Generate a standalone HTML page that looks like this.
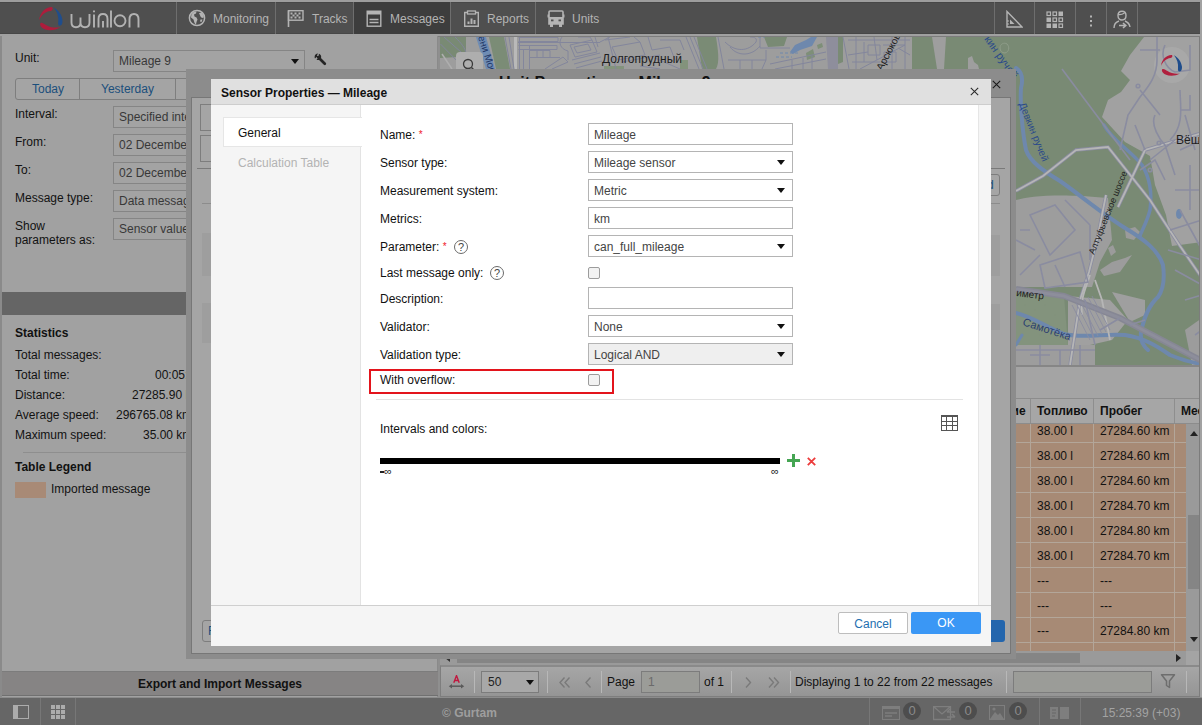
<!DOCTYPE html>
<html><head><meta charset="utf-8">
<style>
*{box-sizing:border-box}
html,body{margin:0;padding:0}
body{width:1202px;height:725px;overflow:hidden;position:relative;background:#8f8f8f;font-family:"Liberation Sans",sans-serif;font-size:12px;color:#111}
.a{position:absolute}
.t{position:absolute;white-space:nowrap;line-height:14px}
/* header */
#hdr{left:0;top:2px;width:1202px;height:32px;background:#4f4f4f;border-top:1px solid #474747;border-bottom:1px solid #474747}
.hl{position:absolute;left:0;width:1202px}
.sep{position:absolute;top:-1px;width:1px;height:32px;background:#6e6e6e}
.nav{position:absolute;top:9px;color:#b4b4b4;font-size:12px;line-height:14px}
/* left panel */
#lp{left:0;top:36px;width:438px;height:661px;background:#a1a1a1;border-left:2px solid #8a8a8a;border-right:1px solid #8a8a8a}
.lbl{position:absolute;color:#121212;font-size:12px;line-height:14px}
.inp{position:absolute;height:22px;border:1px solid #858585;background:#a3a3a3;color:#383838;font-size:12px;line-height:21px;padding-left:5px;white-space:nowrap;overflow:hidden}
.dl{position:absolute;left:380px;white-space:nowrap;line-height:14px;color:#111}
.di{position:absolute;left:588px;width:205px;height:22px;border:1px solid #b4b4b4;background:#fff;color:#444;line-height:22px;padding-left:5px;white-space:nowrap}
.arr{position:absolute;right:7px;top:8px;width:0;height:0;border-left:4px solid transparent;border-right:4px solid transparent;border-top:5px solid #111}
.cb{position:absolute;left:588px;width:12px;height:12px;border:1px solid #9c9c9c;border-radius:2px;background:#f2f2f2}
.hlp{position:absolute;width:14px;height:14px;border:1px solid #6a6a6a;border-radius:50%;color:#444;font-size:11px;line-height:12px;text-align:center}
.sepf{position:absolute;top:0;width:1px;height:27px;background:#777}
.badge{position:absolute;top:4px;width:18px;height:18px;border-radius:50%;background:#4d4d4d;color:#8a8a8a;font-size:13px;line-height:18px;text-align:center}
</style></head><body>

<div class="hl" style="top:0;height:2px;background:#9d9d9d"></div>
<div class="hl" style="top:34px;height:2px;background:#a0a0a0"></div>
<div class="hl" style="top:36px;height:1px;background:#7c7c7c"></div>
<!-- HEADER -->
<div id="hdr" class="a">
  <div class="a" style="left:354px;top:-1px;width:96px;height:32px;background:#3d3d3d"></div>
  <svg class="a" style="left:34px;top:-1px" width="110" height="32" viewBox="34 2 110 32">
    <path d="M51.5 7 C46 7 40 12 39 20.5 C41 15.5 45 11.5 50.5 11 C53 10.7 53.3 7.1 51.5 7 Z" fill="#ad1d3c"/>
    <path d="M41 22.8 C39 24 40.5 27.3 44 29 C49 31 55 30.5 60.5 27.3 C55 28 49.5 27.5 45.5 24.8 C43.5 23.5 42.3 22.2 41 22.8 Z" fill="#ad1d3c"/>
    <path d="M53.3 7.2 C58.5 10 62.3 15 62.5 21 C62.5 24 61.5 25.6 59.8 25.7 C58.3 25.8 57.9 24.2 58.2 22.5 C59 17 57.3 11.5 53.3 7.2 Z" fill="#1f4d8c"/>
    <g stroke="#b2b2b2" stroke-width="1.9" fill="none">
      <path d="M71.5 14 V22.5 Q71.5 27.2 76 27.2 Q80.5 27.2 80.5 22.5 V17.5 M80.5 22.5 Q80.5 27.2 85 27.2 Q89.5 27.2 89.5 22.5 V14"/>
      <path d="M94 14.5 V27.5 M94 10.5 V12.3"/>
      <path d="M98.5 27.5 V19 Q98.5 14 103 14 Q107.5 14 107.5 19 V27.5 M103 21 V27.5"/>
      <path d="M111 10.5 V27.5"/>
      <circle cx="120" cy="20.7" r="5.5"/>
      <path d="M129.5 27.5 V19.5 Q129.5 14 134 14 Q138.5 14 138.5 19.5 V27.5"/>
    </g>
  </svg>
  <svg class="a" style="left:188px;top:6px" width="18" height="18" viewBox="0 0 18 18">
    <circle cx="9" cy="9" r="7.6" fill="none" stroke="#b4b4b4" stroke-width="1.5"/>
    <path d="M3.5 5 C5 3 7 2.3 8.5 2.5 L8 4.5 L6 5.5 L6.5 7.5 L8.5 8.5 L9.5 10.5 L8.5 13 L8 15.5 C6.5 15 6 12 5.5 10.5 L3 8.5 Z" fill="#b4b4b4"/>
    <path d="M11 4 L13.5 3.8 C15 5 15.8 7 15.8 8.5 L14 9 L12.5 7.5 Z M12.5 10.5 L14.5 10.5 L13.5 13 L12 12.5 Z" fill="#b4b4b4"/>
  </svg>
  <svg class="a" style="left:287px;top:6px" width="18" height="18" viewBox="0 0 18 18">
    <path d="M1.5 1.5 V18" stroke="#b4b4b4" stroke-width="1.6"/>
    <rect x="1.5" y="1.7" width="14.5" height="9.5" fill="none" stroke="#b4b4b4" stroke-width="1.4"/>
    <g fill="#b4b4b4"><rect x="3.5" y="3.5" width="2" height="2"/><rect x="7.5" y="3.5" width="2" height="2"/><rect x="11.5" y="3.5" width="2" height="2"/><rect x="5.5" y="5.5" width="2" height="2"/><rect x="9.5" y="5.5" width="2" height="2"/><rect x="3.5" y="7.5" width="2" height="2"/><rect x="7.5" y="7.5" width="2" height="2"/><rect x="11.5" y="7.5" width="2" height="2"/></g>
  </svg>
  <svg class="a" style="left:366px;top:6px" width="16" height="18" viewBox="0 0 16 18">
    <rect x="1.2" y="2.2" width="13.6" height="15" fill="none" stroke="#b4b4b4" stroke-width="1.4"/>
    <rect x="1" y="2" width="14" height="3.5" fill="#b4b4b4"/>
    <path d="M3.5 10.5H12.5M3.5 13.5H12.5" stroke="#b4b4b4" stroke-width="1.3"/>
  </svg>
  <svg class="a" style="left:463px;top:6px" width="17" height="18" viewBox="0 0 17 18">
    <path d="M4 3.5 H1.7 V17.3 H15.3 V3.5 H13" fill="none" stroke="#b4b4b4" stroke-width="1.4"/>
    <rect x="4.5" y="2" width="8" height="3" fill="none" stroke="#b4b4b4" stroke-width="1.3"/>
    <path d="M5.5 15V12.5M8.5 15V9.5M11.5 15V11" stroke="#b4b4b4" stroke-width="2"/>
  </svg>
  <svg class="a" style="left:547px;top:7px" width="18" height="17" viewBox="0 0 18 17">
    <path d="M3 1 H15 Q16 1 16 2 V14 H2 V2 Q2 1 3 1 Z" fill="none" stroke="#b4b4b4" stroke-width="1.6"/>
    <rect x="2" y="7" width="14" height="7" fill="#b4b4b4"/>
    <rect x="3" y="14" width="3" height="3" fill="#b4b4b4"/><rect x="12" y="14" width="3" height="3" fill="#b4b4b4"/>
    <rect x="0.5" y="4.5" width="1.5" height="3" fill="#b4b4b4"/><rect x="16" y="4.5" width="1.5" height="3" fill="#b4b4b4"/>
    <rect x="4" y="9.5" width="2.5" height="1.8" fill="#4f4f4f"/><rect x="11.5" y="9.5" width="2.5" height="1.8" fill="#4f4f4f"/>
  </svg>
  <svg class="a" style="left:1005px;top:7px" width="18" height="18" viewBox="0 0 18 18">
    <path d="M2 1.5 V17 H17 Z" fill="none" stroke="#b4b4b4" stroke-width="1.4" stroke-linejoin="miter"/>
    <path d="M5 9.5 V14 H9.5 Z" fill="#b4b4b4"/>
    <path d="M2 11H4M2 14H4" stroke="#b4b4b4" stroke-width="1"/>
  </svg>
  <svg class="a" style="left:1046px;top:7px" width="18" height="18" viewBox="0 0 18 18">
    <g fill="none" stroke="#b4b4b4" stroke-width="1.2"><rect x="1" y="2" width="3.5" height="3.5"/><rect x="7" y="2" width="3.5" height="3.5"/><rect x="7" y="8" width="3.5" height="3.5"/><rect x="13" y="8" width="3.5" height="3.5"/><rect x="13" y="14" width="3.5" height="3.5"/></g>
    <g fill="#b4b4b4"><rect x="12.5" y="1.5" width="4.5" height="4.5"/><rect x="0.5" y="7.5" width="4.5" height="4.5"/><rect x="0.5" y="13.5" width="4.5" height="4.5"/><rect x="6.5" y="13.5" width="4.5" height="4.5"/></g>
  </svg>
  <svg class="a" style="left:1088px;top:11px" width="6" height="14" viewBox="0 0 6 14"><g fill="#b4b4b4"><rect x="2" y="1.5" width="2" height="2"/><rect x="2" y="6" width="2" height="2"/><rect x="2" y="10.5" width="2" height="2"/></g></svg>
  <svg class="a" style="left:1113px;top:7px" width="18" height="19" viewBox="0 0 18 19">
    <path d="M9 1.2 C6 1.2 5 3.5 5 5.5 C5 8 6.5 10 9 10 C11.5 10 13 8 13 5.5 C13 3.5 12 1.2 9 1.2 Z" fill="none" stroke="#b4b4b4" stroke-width="1.4"/>
    <path d="M5 4.5 C7 5 10 4 11.5 3" stroke="#b4b4b4" stroke-width="1.2" fill="none"/>
    <path d="M1 18 C1 14 3 12 6 11 M12 11 C14.5 12 16.5 13.5 17 17" fill="none" stroke="#b4b4b4" stroke-width="1.4"/>
    <path d="M6 15.5 H12.5 M10 13 L12.8 15.5 L10 18" fill="none" stroke="#b4b4b4" stroke-width="1.6"/>
  </svg>
  <div class="sep" style="left:176px"></div>
  <div class="nav" style="left:213px">Monitoring</div>
  <div class="sep" style="left:275px"></div>
  <div class="nav" style="left:312px">Tracks</div>
  <div class="sep" style="left:353px"></div>
  
  <div class="nav" style="left:390px">Messages</div>
  <div class="sep" style="left:450px"></div>
  <div class="nav" style="left:487px">Reports</div>
  <div class="sep" style="left:535px"></div>
  <div class="nav" style="left:572px">Units</div>
  <div class="sep" style="left:994px"></div>
  <div class="sep" style="left:1034px"></div>
  <div class="sep" style="left:1075px"></div>
  <div class="sep" style="left:1106px"></div>
  <div class="sep" style="left:1137px"></div>
</div>

<!-- LEFT PANEL -->
<div id="lp" class="a"></div>
<div class="lbl" style="left:15px;top:51px">Unit:</div>
<div class="inp" style="left:113px;top:50px;width:192px">Mileage 9</div>
<div class="a" style="left:291px;top:59px;width:0;height:0;border-left:4px solid transparent;border-right:4px solid transparent;border-top:5px solid #111"></div>
<svg class="a" style="left:312px;top:51px" width="16" height="16" viewBox="0 0 16 16"><path d="M6.5 6.5 L12.8 12.8" stroke="#252525" stroke-width="2.7" stroke-linecap="round"/><path d="M6 2.5 C4 2.5 2.6 4 2.6 5.9 C2.6 6.5 2.7 7 3 7.4 L4.5 5.9 L5.9 7.2 L4.5 8.8 C4.9 9 5.4 9.1 5.9 9.1 C7.8 9.1 9.2 7.7 9.2 5.9 C9.2 4.3 8.3 3.1 6.9 2.7 L6.7 4.6 L5.9 5.3 L4.9 4.4 Z" fill="#252525"/></svg>
<div class="a" style="left:15px;top:78px;width:180px;height:22px;border:1px solid #7e7e7e;border-radius:3px;background:#a4a4a4"></div>
<div class="a" style="left:79px;top:78px;width:1px;height:22px;background:#7e7e7e"></div>
<div class="a" style="left:175px;top:78px;width:1px;height:22px;background:#7e7e7e"></div>
<div class="t" style="left:32px;top:82px;color:#1b4f7c">Today</div>
<div class="t" style="left:101px;top:82px;color:#1b4f7c">Yesterday</div>
<div class="lbl" style="left:15px;top:107px">Interval:</div>
<div class="inp" style="left:113px;top:106px;width:100px">Specified interval</div>
<div class="lbl" style="left:15px;top:135px">From:</div>
<div class="inp" style="left:113px;top:134px;width:100px">02 December</div>
<div class="lbl" style="left:15px;top:163px">To:</div>
<div class="inp" style="left:113px;top:162px;width:100px">02 December</div>
<div class="lbl" style="left:15px;top:191px">Message type:</div>
<div class="inp" style="left:113px;top:190px;width:100px">Data messages</div>
<div class="lbl" style="left:15px;top:219px">Show</div>
<div class="lbl" style="left:15px;top:233px">parameters as:</div>
<div class="inp" style="left:113px;top:218px;width:100px">Sensor values</div>
<div class="a" style="left:2px;top:292px;width:436px;height:23px;background:#656565"></div>
<div class="t" style="left:15px;top:326px;font-weight:bold">Statistics</div>
<div class="lbl" style="left:15px;top:348px">Total messages:</div>
<div class="lbl" style="left:15px;top:368px">Total time:</div>
<div class="lbl" style="left:15px;top:388px">Distance:</div>
<div class="lbl" style="left:15px;top:408px">Average speed:</div>
<div class="lbl" style="left:15px;top:428px">Maximum speed:</div>
<div class="lbl" style="left:155px;top:368px">00:05:00</div>
<div class="lbl" style="left:132px;top:388px">27285.90 km</div>
<div class="lbl" style="left:116px;top:408px">296765.08 km/h</div>
<div class="lbl" style="left:143px;top:428px">35.00 km/h</div>
<div class="a" style="left:23px;top:452px;width:415px;height:1px;background:#8e8e8e"></div>
<div class="t" style="left:15px;top:460px;font-weight:bold">Table Legend</div>
<div class="a" style="left:15px;top:482px;width:31px;height:16px;background:#a88a76"></div>
<div class="lbl" style="left:51px;top:482px">Imported message</div>
<div class="a" style="left:2px;top:671px;width:436px;height:25px;background:#868484;border-top:1px solid #7c7c7c;border-bottom:1px solid #707070"></div>
<div class="t" style="left:138px;top:677px;font-weight:bold">Export and Import Messages</div>


<!-- MAP -->
<div id="map" class="a" style="left:440px;top:37px;width:762px;height:328px;background:#9d9d9d;overflow:hidden">
<svg width="762" height="328" viewBox="440 37 762 328" style="position:absolute;left:0;top:0">
 <!-- ===== top strip ===== -->
 <path d="M440 37 H466 V52 L458 57 L440 58 Z" fill="#798a74"/>
 <path d="M489 37 H504 L510 69 H496 Z" fill="#7b8c76"/>
 <path d="M697 37 H716 C718 50 720 62 716 69 H702 Z" fill="#7a8b75"/>
 <path d="M604 66 h20 v3 h-20 Z M680 60 h8 v9 h-8 Z" fill="#83937c"/>
 <path d="M764 37 H787 L784 46 L768 47 Z" fill="#798a74"/>
 <path d="M817 45 l5 -2 l1 4 l-5 2 Z M806 53 l7 -4 l2 8 l-8 3 Z" fill="#7e8f78"/>
 <path d="M836 37 H843 V62 L838 64 Z" fill="#7a8b75"/>
 <path d="M912 37 H1016 V69 H912 Z" fill="#798a74"/>
 <path d="M932 37 H946 L944 69 H937 Z" fill="#9e9e9e"/>
 <path d="M968 58 l4 -2 l2 6 l4 3 l1 4 h-11 Z" fill="#9e9e9e"/>
 <path d="M817 37 L812 46 L800 50 L793 54 L790 52 L795 45 L806 40 L811 37 Z" fill="#6e88ad"/>
 <path d="M476 37 H486 L495 69 H486 Z" fill="#6e8cb4"/>
 <g stroke="#b9b9b9" stroke-width="3" fill="none"><path d="M515.5 37 V69"/></g><path d="M442 54 L452 69" stroke="#aeaeae" stroke-width="1.5"/>
 <path d="M826 37 H838 V69 H828 Z" fill="#8e8e9c"/>
 <g stroke="#83869c" stroke-width="1" fill="none">
  <path d="M440.5 44 L462 66 M444 37 L470 60 M455 37 C462 44 465 48 466 53"/>
  <path d="M505 37 L511 69 M509 37 L514 69 M519.5 37 V69"/>
  <path d="M518.5 37.5 H558 V41.5 H518.5 M518 42.5 H600 M518.5 45.5 H557 V49.5 H518.5 M523.5 49.5 V69 M529.5 45.5 V69 M529.5 50.5 H550 V57.5 H529.5 M537 50 V57 M543 50 V57 M529 57.5 H560 M545 69 L563 57 L568 62 L552 69"/>
  <path d="M562 37 C558 42 560 49 568 51 V60"/>
  <path d="M570 45 L592 40 L597 52 L575 57 Z M574 47 L588 44 L591 50 L577 53 Z M572 60 L600 53 M574 64 L601 57 M576 68 L602 61"/>
  <path d="M578 37 L590 37 L592 40 M595 37 L598 47 M600 42 L610 37"/>
  <path d="M605 40 L630 37 M608 37 L616 69 M612 47 L640 42 L645 55 L618 60 Z M622 62 L660 55 M634 37 L640 42 M648 37 L652 50 L670 47 L675 60 M655 58 L680 69 M660 40 H680 L684 50 M640 66 L660 69"/>
  <path d="M686 37 L699 69 M690 37 L703 69 M694 37 L707 69"/>
  <path d="M718 37 L724 69 M725 42 C735 52 748 52 756 42 C758 37 752 37 750 37 M730 47 C738 57 752 56 760 46 M728 60 H766 M740 60 V69 M752 60 V69"/>
  <path d="M760 37 V48 H790 M766 50 V60 L762 69 M770 64 L826 52 M775 69 L826 59 M792 60 V69 M803 58 V69 M812 56 V69"/>
  <path d="M843 37 L849 69 M848 40 H910 M856 37 V69 M864 42 V62 M874 37 L877 60 M883 45 H905 M892 37 V69 M898 48 L910 55 M848 55 L868 52 M852 62 H880 M860 69 L905 45 M905 37 V69 M868 45 H880 V55 H868 Z M884 52 H896 V62 H884 Z"/>
</g>
 <path d="M758 37 L765 37 M780 53 H800 M776 57 H792" stroke="#6e88ad" stroke-width="1" stroke-dasharray="3 2"/>
 <path d="M1000 48 C1000 44 1004 42 1007 44 C1010 47 1009 52 1005 53 C1002 53 1000 51 1000 48 Z" stroke="#8f9d8a" fill="none"/>
 <path d="M1062 68 L1100 130" stroke="#8a8d8c" stroke-width="0.9"/>
 <!-- ===== right strip ===== -->
 <path d="M1016 37 H1202 V365 H1016 Z" fill="#798a74"/>
 <path d="M1144 37 H1202 V242 L1172 246 L1166 215 L1155 185 L1150 156 L1125 142 L1102 117 L1108 100 L1121 92 L1130 80 L1121 71 L1130 55 Z" fill="#a1a1a1"/>
 <circle cx="1172" cy="65" r="18" fill="#a8a8a8"/>
 <path d="M1016 200 C1030 196 1060 193 1108 198 L1112 240 L1100 262 L1092 287 L1016 287 Z" fill="#9d9d9d"/>
 <path d="M1016 288 L1064 296 L1068 345 L1016 345 Z" fill="#83937d"/>
 <path d="M1016 345 H1095 V365 H1016 Z" fill="#9d9d9d"/>
 <path d="M1068 296 L1110 300 L1128 320 L1112 340 L1090 345 L1068 345 Z" fill="#a0a0a0"/>
 <path d="M1100 270 L1112 262 L1125 258 L1132 255 L1120 272 L1104 276 Z" fill="#9c9c9c"/>
 <path d="M1112 292 L1145 300 L1145 315 L1130 322 Z" fill="#9f9f9f"/>
 <path d="M1185 330 L1202 318 V365 H1192 Z" fill="#9c9c9c"/>
 <path d="M1125 230 l10 -3 l5 5 l-6 8 l-8 -2 Z M1108 248 l5 -3 l3 7 l-5 4 Z" fill="#9b9b9b"/>
 <!-- rivers -->
 <g stroke="#6e88ad" fill="none" stroke-linecap="round" stroke-linejoin="round">
  <path d="M1016 68 C1022 72 1023 80 1021 88 C1020 100 1022 130 1026 150 C1030 162 1045 172 1060 181 C1080 195 1100 212 1125 228 C1145 240 1158 250 1163 265 C1165 280 1163 290 1158 297 C1148 306 1144 318 1141 332 C1140 340 1142 345 1148 350" stroke-width="4"/>
  <path d="M1104 125 C1112 140 1130 150 1142 165 C1150 178 1152 195 1150 210 C1147 222 1142 230 1140 236" stroke-width="3.5"/>
  <path d="M1016 313 C1030 316 1045 326 1064 334 C1085 339 1105 333 1125 335 C1145 338 1158 347 1170 355 C1182 360 1195 363 1202 364" stroke-width="4"/>
  <path d="M1016 345 L1022 335" stroke-width="3"/>
 </g>
 <ellipse cx="1179" cy="214" rx="3" ry="5" fill="#6e88ad"/>
 <!-- roads light -->
 <g stroke="#8a8ca0" stroke-width="3.4" fill="none">
  <path d="M1016 191 L1043 176 L1076 150 L1108 147 L1150 200 L1180 246 L1202 278"/>
  <path d="M1118 207 L1145 150 L1202 133"/>
  <path d="M1106 195 L1097 240 L1089 272 L1080 300 L1070 365"/>
 </g>
 <g stroke="#b6b6b6" stroke-width="1.8" fill="none">
  <path d="M1016 191 L1043 176 L1076 150 L1108 147 L1150 200 L1180 246 L1202 278"/>
  <path d="M1118 207 L1145 150 L1202 133"/>
  <path d="M1106 195 L1097 240 L1089 272 L1080 300 L1070 365"/>
  <path d="M1090 275 C1085 290 1080 300 1082 315 M1095 280 L1102 300 L1110 340"/>
 </g>
 <path d="M1016 289 L1064 296 L1120 318 L1202 361" stroke="#868794" stroke-width="6" fill="none"/>
 <path d="M1016 289 L1064 296 L1120 318 L1202 361" stroke="#8d8e9b" stroke-width="3" fill="none"/>
 <g stroke="#8a8ca0" stroke-width="1.6" fill="none">
  <path d="M1140 50 H1160 M1157 37 V60 C1157 75 1150 85 1140 97 L1128 115 L1120 150 M1140 90 L1160 115 M1135 125 L1145 150 M1165 45 C1160 55 1165 68 1175 72 L1190 70 V45 M1190 95 V110 H1180 M1155 115 C1150 125 1160 140 1165 145 L1175 175 M1170 140 C1185 125 1180 105 1180 90 M1150 160 L1175 140 M1140 170 L1155 160 L1165 180 M1185 115 L1195 150 M1180 150 L1202 140 M1175 190 L1202 190 M1190 165 L1190 210 M1170 230 L1202 220 M1180 210 L1202 250 M1168 250 L1202 260 M1175 270 L1202 285 M1185 300 L1202 295 M1195 335 L1202 330"/>
  <circle cx="1138" cy="86" r="1.8"/><circle cx="1159" cy="143" r="1.8"/><circle cx="1150" cy="170" r="1.8"/>
  <path d="M1030 215 L1055 205 L1075 230 L1050 255 Z M1040 265 L1080 252 L1088 282 L1045 288 Z M1016 240 L1035 250 M1020 275 L1040 255 M1065 200 L1090 225 M1090 225 V260 M1020 230 H1030 M1055 265 L1065 287 M1100 330 L1120 318 M1130 325 L1145 320"/>
  <path d="M1016 350 H1095 M1040 345 V365 M1060 350 V365 M1080 345 V365 M1030 355 H1050 M1085 300 L1095 345"/>
  <path d="M1062 69 L1130 160"/>
 </g>
 <g stroke="#8a8ca0" stroke-width="0.9" fill="none">
  <path d="M1072 305 L1090 340 M1076 303 L1094 338 M1080 301 L1098 336 M1084 299 L1102 334 M1088 297 L1106 332 M1092 296 L1110 330"/>
 </g>
 <g fill="#83937c"><circle cx="1025" cy="305" r="0.8"/><circle cx="1035" cy="310" r="0.8"/><circle cx="1045" cy="305" r="0.8"/><circle cx="1030" cy="325" r="0.8"/><circle cx="1050" cy="325" r="0.8"/><circle cx="1040" cy="335" r="0.8"/><circle cx="1055" cy="315" r="0.8"/></g>
 <text x="602" y="62.5" font-family="Liberation Sans" font-size="12" fill="#1e1e1e">Долгопрудный</text>
 <text x="1176" y="144" font-family="Liberation Sans" font-size="12" fill="#1e1e1e">Вёшк</text>
 <text x="1016" y="296" font-family="Liberation Sans" font-size="10" fill="#1e1e1e" transform="rotate(7 1016 296)">иметр</text>
 <text x="1022" y="325" font-family="Liberation Sans" font-size="11" fill="#2b4070" transform="rotate(18 1022 325)">Самотёка</text>
 <text x="1094" y="255" font-family="Liberation Sans" font-size="9" fill="#1e1e1e" transform="rotate(-68 1094 255)">Алтуфьевское шоссе</text>
 <text x="1019" y="104" font-family="Liberation Sans" font-size="10" fill="#2b4a8a" transform="rotate(68 1019 104)">Девкин ручей</text>
 <text x="984" y="39" font-family="Liberation Sans" font-size="11" fill="#2b4a8a" transform="rotate(55 984 39)">кин ручей</text>
 <text x="478" y="37" font-family="Liberation Sans" font-size="10" fill="#1e3566" transform="rotate(72 478 37)">ени Мос</text>
 <text x="882" y="71" font-family="Liberation Sans" font-size="10" fill="#1e1e1e" transform="rotate(-62 882 71)">Арсюкова</text>
 <!-- wialon map logo -->
 <path d="M1171.5 55 C1166 55 1161.5 60 1161 66 C1162.5 62 1166 58.5 1170.5 58 C1172.5 57.8 1173 55 1171.5 55 Z" fill="#b0203e"/>
 <path d="M1162.5 69 C1161 70.5 1162.5 73 1165.5 74.5 C1170 76.5 1175.5 76 1180 73.5 C1175.5 74 1171 73.5 1167.5 71 C1166 70 1164 68.5 1162.5 69 Z" fill="#b0203e"/>
 <path d="M1174 55.3 C1178.5 58 1181.5 62 1182 67 C1182 70 1181 71.5 1179.5 71.5 C1178 71.5 1177.8 70 1178 68.5 C1178.5 63.5 1177 59 1174 55.3 Z" fill="#1f4d8c"/>
</svg>
<div class="a" style="left:16px;top:15px;width:27px;height:26px;background:#aeaeae;border-radius:4px"></div>
<svg class="a" style="left:22px;top:21px" width="14" height="14" viewBox="0 0 14 14"><circle cx="6" cy="6" r="4.5" stroke="#3a3a3a" stroke-width="1.3" fill="none"/><path d="M9.5 9.5 L13 13" stroke="#3a3a3a" stroke-width="1.5"/></svg>
</div>

<!-- TABLE -->
<div id="tbl" class="a" style="left:440px;top:365px;width:762px;height:300px;background:#a4a4a4;overflow:hidden">
  <div class="a" style="left:0;top:0;width:762px;height:2px;background:#868686"></div>
  <div class="a" style="left:0;top:33px;width:762px;height:26px;background:#a6a6a6;border-top:1px solid #8c8c8c;border-bottom:1px solid #8c8c8c"></div>
  <div class="a" style="left:590px;top:34px;width:1px;height:24px;background:#8e8e8e"></div>
  <div class="a" style="left:653px;top:34px;width:1px;height:24px;background:#8e8e8e"></div>
  <div class="a" style="left:734px;top:34px;width:1px;height:24px;background:#8e8e8e"></div>
  <div class="t" style="left:523px;top:39px;width:61px;text-align:right;font-weight:bold">Показание</div>
  <div class="t" style="left:597px;top:39px;font-weight:bold">Топливо</div>
  <div class="t" style="left:660px;top:39px;font-weight:bold">Пробег</div>
  <div class="t" style="left:741px;top:39px;font-weight:bold">Местоположение</div>
  <div class="a" style="left:0;top:59px;width:746px;height:227px;background:#a78a75"></div>
  <div class="a" style="left:0;top:77px;width:746px;height:1px;background:#b3a699"></div>
  <div class="t" style="left:597px;top:59px;color:#111">38.00 l</div>
  <div class="t" style="left:660px;top:59px;color:#111">27284.60 km</div>
  <div class="a" style="left:0;top:102px;width:746px;height:1px;background:#b3a699"></div>
  <div class="t" style="left:597px;top:84px;color:#111">38.00 l</div>
  <div class="t" style="left:660px;top:84px;color:#111">27284.60 km</div>
  <div class="a" style="left:0;top:127px;width:746px;height:1px;background:#b3a699"></div>
  <div class="t" style="left:597px;top:109px;color:#111">38.00 l</div>
  <div class="t" style="left:660px;top:109px;color:#111">27284.60 km</div>
  <div class="a" style="left:0;top:152px;width:746px;height:1px;background:#b3a699"></div>
  <div class="t" style="left:597px;top:134px;color:#111">38.00 l</div>
  <div class="t" style="left:660px;top:134px;color:#111">27284.70 km</div>
  <div class="a" style="left:0;top:177px;width:746px;height:1px;background:#b3a699"></div>
  <div class="t" style="left:597px;top:159px;color:#111">38.00 l</div>
  <div class="t" style="left:660px;top:159px;color:#111">27284.80 km</div>
  <div class="a" style="left:0;top:202px;width:746px;height:1px;background:#b3a699"></div>
  <div class="t" style="left:597px;top:184px;color:#111">38.00 l</div>
  <div class="t" style="left:660px;top:184px;color:#111">27284.70 km</div>
  <div class="a" style="left:0;top:227px;width:746px;height:1px;background:#b3a699"></div>
  <div class="t" style="left:597px;top:209px;color:#111">---</div>
  <div class="t" style="left:660px;top:209px;color:#111">---</div>
  <div class="a" style="left:0;top:252px;width:746px;height:1px;background:#b3a699"></div>
  <div class="t" style="left:597px;top:234px;color:#111">---</div>
  <div class="t" style="left:660px;top:234px;color:#111">---</div>
  <div class="a" style="left:0;top:277px;width:746px;height:1px;background:#b3a699"></div>
  <div class="t" style="left:597px;top:259px;color:#111">---</div>
  <div class="t" style="left:660px;top:259px;color:#111">27284.80 km</div>
  <div class="a" style="left:590px;top:59px;width:1px;height:227px;background:#b3a699"></div>
  <div class="a" style="left:653px;top:59px;width:1px;height:227px;background:#b3a699"></div>
  <div class="a" style="left:734px;top:59px;width:1px;height:227px;background:#b3a699"></div>
  <div class="a" style="left:746px;top:59px;width:16px;height:227px;background:#9a9a9a"></div>
  <div class="a" style="left:748px;top:150px;width:14px;height:74px;background:#858585"></div>
  <div class="a" style="left:750px;top:66px;width:0;height:0;border-left:4px solid transparent;border-right:4px solid transparent;border-bottom:5px solid #222"></div>
  <div class="a" style="left:750px;top:272px;width:0;height:0;border-top:5px solid #222;border-left:4px solid transparent;border-right:4px solid transparent"></div>
  <div class="a" style="left:0;top:286px;width:746px;height:14px;background:#9a9a9a"></div>
  <div class="a" style="left:17px;top:288px;width:623px;height:10px;background:#858585"></div>
  <div class="a" style="left:5px;top:289px;width:0;height:0;border-right:5px solid #333;border-top:4px solid transparent;border-bottom:4px solid transparent"></div>
  <div class="a" style="left:736px;top:289px;width:0;height:0;border-left:5px solid #222;border-top:4px solid transparent;border-bottom:4px solid transparent"></div>
</div>

<!-- PAGINATION -->
<div id="pg" class="a" style="left:440px;top:665px;width:762px;height:32px;background:linear-gradient(#a6a6a6,#959595);border-top:2px solid #8a8a8a;border-bottom:1px solid #7e7e7e;border-left:1px solid #7e7e7e">
  <svg class="a" style="left:7px;top:8px" width="17" height="16" viewBox="0 0 17 16"><path d="M5.8 7.8 L8.5 0.6 L11.2 7.8 M6.7 5.5 H10.3" stroke="#c0183f" stroke-width="1.4" fill="none"/><path d="M3 11.2 H14" stroke="#5a5a5a" stroke-width="1.5"/><path d="M0.8 11.2 L4 9 V13.4 Z M16.2 11.2 L13 9 V13.4 Z" fill="#5a5a5a"/></svg>
  <div class="a" style="left:33px;top:4px;width:1px;height:22px;background:#b8b8b8"></div>
  <div class="a" style="left:40px;top:4px;width:58px;height:22px;background:#a8a8a8;border:1px solid #7c7c7c"></div>
  <div class="t" style="left:47px;top:8px;color:#222">50</div>
  <div class="a" style="left:85px;top:13px;width:0;height:0;border-left:4px solid transparent;border-right:4px solid transparent;border-top:5px solid #111"></div>
  <div class="a" style="left:106px;top:4px;width:1px;height:22px;background:#b8b8b8"></div>
  <svg class="a" style="left:118px;top:10px" width="12" height="11" viewBox="0 0 12 11"><path d="M5.5 0.5 L1 5.5 L5.5 10.5 M10.5 0.5 L6 5.5 L10.5 10.5" stroke="#7a7a7a" stroke-width="1.4" fill="none"/></svg>
  <svg class="a" style="left:144px;top:10px" width="7" height="11" viewBox="0 0 7 11"><path d="M5.5 0.5 L1 5.5 L5.5 10.5" stroke="#7a7a7a" stroke-width="1.4" fill="none"/></svg>
  <div class="a" style="left:160px;top:4px;width:1px;height:22px;background:#b8b8b8"></div>
  <div class="t" style="left:166px;top:8px;color:#111">Page</div>
  <div class="a" style="left:200px;top:4px;width:59px;height:22px;background:#9b9c98;border:1px solid #7c7c7c"></div>
  <div class="t" style="left:207px;top:8px;color:#6a6a6a">1</div>
  <div class="t" style="left:263px;top:8px;color:#111">of 1</div>
  <div class="a" style="left:290px;top:4px;width:1px;height:22px;background:#b8b8b8"></div>
  <svg class="a" style="left:304px;top:10px" width="7" height="11" viewBox="0 0 7 11"><path d="M1 0.5 L5.5 5.5 L1 10.5" stroke="#7a7a7a" stroke-width="1.4" fill="none"/></svg>
  <svg class="a" style="left:327px;top:10px" width="12" height="11" viewBox="0 0 12 11"><path d="M1 0.5 L5.5 5.5 L1 10.5 M6 0.5 L10.5 5.5 L6 10.5" stroke="#7a7a7a" stroke-width="1.4" fill="none"/></svg>
  <div class="a" style="left:349px;top:4px;width:1px;height:22px;background:#b8b8b8"></div>
  <div class="t" style="left:354px;top:8px;color:#111">Displaying 1 to 22 from 22 messages</div>
  <div class="a" style="left:565px;top:4px;width:1px;height:22px;background:#b8b8b8"></div>
  <div class="a" style="left:572px;top:4px;width:139px;height:22px;background:#9b9c98;border:1px solid #7c7c7c"></div>
  <svg class="a" style="left:719px;top:6px" width="16" height="16" viewBox="0 0 16 16"><path d="M1.5 1.8H14.5L9.5 8V14.5L6.5 12.5V8Z" stroke="#6e6e6e" stroke-width="1.5" fill="none" stroke-linejoin="round"/></svg>
  <div class="a" style="left:745px;top:4px;width:1px;height:22px;background:#b8b8b8"></div>
</div>

<!-- FOOTER -->
<div id="ftr" class="a" style="left:0;top:697px;width:1202px;height:28px;background:#666;border-top:1px solid #8c8c8c">
  <div class="a" style="left:13px;top:7px;width:16px;height:14px;border:1.3px solid #acacac;border-left:5px solid #acacac"></div>
  <div class="sepf" style="left:40px"></div>
  <svg class="a" style="left:51px;top:7px" width="14" height="14" viewBox="0 0 14 14" fill="#acacac"><rect x="0" y="0" width="4" height="4"/><rect x="5" y="0" width="4" height="4"/><rect x="10" y="0" width="4" height="4"/><rect x="0" y="5" width="4" height="4"/><rect x="5" y="5" width="4" height="4"/><rect x="10" y="5" width="4" height="4"/><rect x="0" y="10" width="4" height="4"/><rect x="5" y="10" width="4" height="4"/><rect x="10" y="10" width="4" height="4"/></svg>
  <div class="sepf" style="left:75px"></div>
  <div class="t" style="left:442px;top:8px;font-weight:bold;color:#9e9e9e">© Gurtam</div>
  <div class="sepf" style="left:869px"></div>
  <svg class="a" style="left:882px;top:8px" width="18" height="14" viewBox="0 0 18 14"><rect x="0.5" y="0.5" width="17" height="13" fill="none" stroke="#7e7e7e"/><rect x="0" y="0" width="18" height="3" fill="#7e7e7e"/><path d="M3 7H15M3 10H10" stroke="#7e7e7e" stroke-width="1.4"/></svg>
  <div class="badge" style="left:903px">0</div>
  <svg class="a" style="left:933px;top:8px" width="23" height="15" viewBox="0 0 23 15"><path d="M0.5 0.5H17.5V13.5H0.5Z M0.5 0.5L9 8L17.5 0.5" fill="none" stroke="#7e7e7e" stroke-width="1.3"/><path d="M14 11H22M22 11L19 8M14 6H22M14 6L17 3" stroke="#7e7e7e" stroke-width="1.5" fill="none"/></svg>
  <div class="badge" style="left:959px">0</div>
  <svg class="a" style="left:989px;top:7px" width="16" height="15" viewBox="0 0 16 15"><rect x="0.5" y="0.5" width="15" height="14" fill="none" stroke="#7e7e7e"/><path d="M1 14L6 7L9 10L11 8L15 14Z" fill="#7e7e7e"/><circle cx="5" cy="4" r="1.6" fill="#7e7e7e"/></svg>
  <div class="badge" style="left:1009px">0</div>
  <div class="sepf" style="left:1039px"></div>
  <svg class="a" style="left:1050px;top:9px" width="19" height="12" viewBox="0 0 19 12"><rect x="0" y="0" width="8" height="12" fill="#7e7e7e"/><rect x="10" y="0" width="9" height="12" fill="#7e7e7e"/><path d="M2 3H6M2 6H6M2 9H5" stroke="#666" stroke-width="1"/></svg>
  <div class="sepf" style="left:1080px"></div>
  <div class="t" style="left:1102px;top:8px;color:#a3a3a3">15:25:39 (+03)</div>
</div>

<div class="a" style="left:1199px;top:37px;width:1px;height:660px;background:#7c7c7c"></div>
<div class="a" style="left:1200px;top:0;width:2px;height:697px;background:#a2a2a2"></div>
<!-- OUTER DIALOG -->
<div id="od" class="a" style="left:186px;top:69px;width:830px;height:590px;background:#8c8c8c">
  <div class="t" style="left:313px;top:5px;font-size:16px;line-height:18px;font-weight:bold;color:#111">Unit Properties — Mileage 9</div>
  <svg class="a" style="left:806px;top:11px" width="9" height="9" viewBox="0 0 9 9"><path d="M0.8 0.8 L8.2 8.2 M8.2 0.8 L0.8 8.2" stroke="#1a1a1a" stroke-width="1.05"/></svg>
  <div class="a" style="left:5px;top:28px;width:820px;height:557px;background:#a5a5a5;border:1px solid #777"></div>
  <div class="a" style="left:14px;top:35px;width:40px;height:27px;border:1px solid #7d7d7d"></div>
  <div class="a" style="left:14px;top:66px;width:40px;height:27px;border:1px solid #7d7d7d"></div>
  <div class="a" style="left:11px;top:99px;width:40px;height:1px;background:#7a7a7a"></div>
  <div class="a" style="left:16px;top:134px;width:30px;height:1px;background:#8c8c8c"></div>
  <div class="a" style="left:16px;top:164px;width:30px;height:43px;background:#9e9e9e"></div>
  <div class="a" style="left:16px;top:234px;width:30px;height:40px;background:#9e9e9e"></div>
  <div class="a" style="left:790px;top:99px;width:29px;height:1px;background:#7a7a7a"></div>
  <div class="a" style="left:780px;top:105px;width:34px;height:22px;border:1px solid #7d7d7d;border-radius:3px"></div>
  <div class="t" style="left:801px;top:109px;color:#1b4f7c">d</div>
  <div class="a" style="left:790px;top:134px;width:24px;height:1px;background:#8c8c8c"></div>
  <div class="a" style="left:790px;top:166px;width:24px;height:41px;background:#9e9e9e"></div>
  <div class="a" style="left:790px;top:235px;width:24px;height:26px;background:#9e9e9e"></div>
  <div class="a" style="left:16px;top:551px;width:40px;height:22px;border:1px solid #7d7d7d;border-radius:3px"></div>
  <div class="t" style="left:22px;top:555px;color:#1b4f7c">R</div>
  <div class="a" style="left:760px;top:551px;width:59px;height:22px;background:#2466ad;border-radius:3px"></div>
</div>

<!-- INNER DIALOG -->
<div id="dlg" class="a" style="left:211px;top:79px;width:780px;height:567px;background:#fff;overflow:hidden">
  <div class="a" style="left:0;top:0;width:780px;height:26px;background:#e0e0e0;border-bottom:1px solid #cdcdcd"></div>
  <div class="t" style="left:10px;top:7px;font-weight:bold;color:#111">Sensor Properties — Mileage</div>
  <svg class="a" style="left:759px;top:8px" width="9" height="9" viewBox="0 0 9 9"><path d="M0.8 0.8 L8.2 8.2 M8.2 0.8 L0.8 8.2" stroke="#2a2a2a" stroke-width="1.05"/></svg>
  <div class="a" style="left:0;top:26px;width:150px;height:500px;background:#f5f5f5;border-right:1px solid #e3e3e3"></div>
  <div class="a" style="left:12px;top:38px;width:139px;height:30px;background:#fff;border:1px solid #e6e6e6;border-right:none"></div>
  <div class="t" style="left:27px;top:47px;color:#111">General</div>
  <div class="t" style="left:27px;top:77px;color:#b3b3b3">Calculation Table</div>
  <div class="a" style="left:767px;top:26px;width:13px;height:500px;background:#f5f5f5;border-left:1px solid #e6e6e6"></div>
  <div class="a" style="left:0;top:526px;width:780px;height:41px;background:#f5f5f5;border-top:1px solid #cfcfcf"></div>
  <div class="a btn" style="left:627px;top:533px;width:70px;height:22px;background:#fff;border:1px solid #bdbdbd;border-radius:2px;color:#1e6fb0;text-align:center;line-height:22px">Cancel</div>
  <div class="a btn" style="left:700px;top:533px;width:70px;height:22px;background:#3a97f5;border-radius:2px;color:#fff;text-align:center;line-height:22px">OK</div>
</div>
<div class="dl" style="top:128px">Name: <span style="color:#f0202a;font-size:10px;position:relative;top:-1px">*</span></div>
<div class="dl" style="top:156px">Sensor type:</div>
<div class="dl" style="top:184px">Measurement system:</div>
<div class="dl" style="top:212px">Metrics:</div>
<div class="dl" style="top:240px">Parameter: <span style="color:#f0202a;font-size:10px;position:relative;top:-1px">*</span></div>
<div class="dl" style="top:266px">Last message only:</div>
<div class="dl" style="top:292px">Description:</div>
<div class="dl" style="top:320px">Validator:</div>
<div class="dl" style="top:348px">Validation type:</div>
<div class="dl" style="top:373px">With overflow:</div>
<div class="hlp" style="left:454px;top:240px">?</div>
<div class="hlp" style="left:490px;top:266px">?</div>
<div class="di" style="top:123px">Mileage</div>
<div class="di" style="top:151px">Mileage sensor<i class="arr"></i></div>
<div class="di" style="top:179px">Metric<i class="arr"></i></div>
<div class="di" style="top:207px">km</div>
<div class="di" style="top:235px">can_full_mileage<i class="arr"></i></div>
<div class="cb" style="top:267px"></div>
<div class="di" style="top:287px"></div>
<div class="di" style="top:315px">None<i class="arr"></i></div>
<div class="di" style="top:343px;background:#efefef">Logical AND<i class="arr"></i></div>
<div class="a" style="left:369px;top:369px;width:245px;height:25px;border:2px solid #e3141c"></div>
<div class="cb" style="top:374px"></div>
<div class="a" style="left:376px;top:399px;width:587px;height:1px;background:#e3e3e3"></div>
<div class="dl" style="top:422px">Intervals and colors:</div>
<svg class="a" style="left:941px;top:415px" width="17" height="16" viewBox="0 0 17 16"><rect x="0.5" y="0.5" width="16" height="15" fill="#fff" stroke="#555"/><rect x="0" y="0" width="17" height="2" fill="#555"/><path d="M0 6.5H17M0 10.5H17M5.5 2V16M11.5 2V16" stroke="#555"/></svg>
<div class="a" style="left:380px;top:458px;width:400px;height:6px;background:#000"></div>
<div class="a" style="left:380px;top:471px;width:4px;height:1.6px;background:#222"></div><div class="t" style="left:384px;top:465px;font-size:11px;line-height:12px;color:#222">∞</div>
<div class="t" style="left:771px;top:465px;font-size:11px;line-height:12px;color:#222">∞</div>
<svg class="a" style="left:787px;top:454px" width="13" height="13" viewBox="0 0 13 13"><path d="M6.5 0V13M0 6.5H13" stroke="#45a553" stroke-width="3"/></svg>
<svg class="a" style="left:807px;top:457px" width="9" height="9" viewBox="0 0 9 9"><path d="M0.8 0.8L8.2 8.2M8.2 0.8L0.8 8.2" stroke="#ec3b3b" stroke-width="1.8"/></svg>


</body></html>
